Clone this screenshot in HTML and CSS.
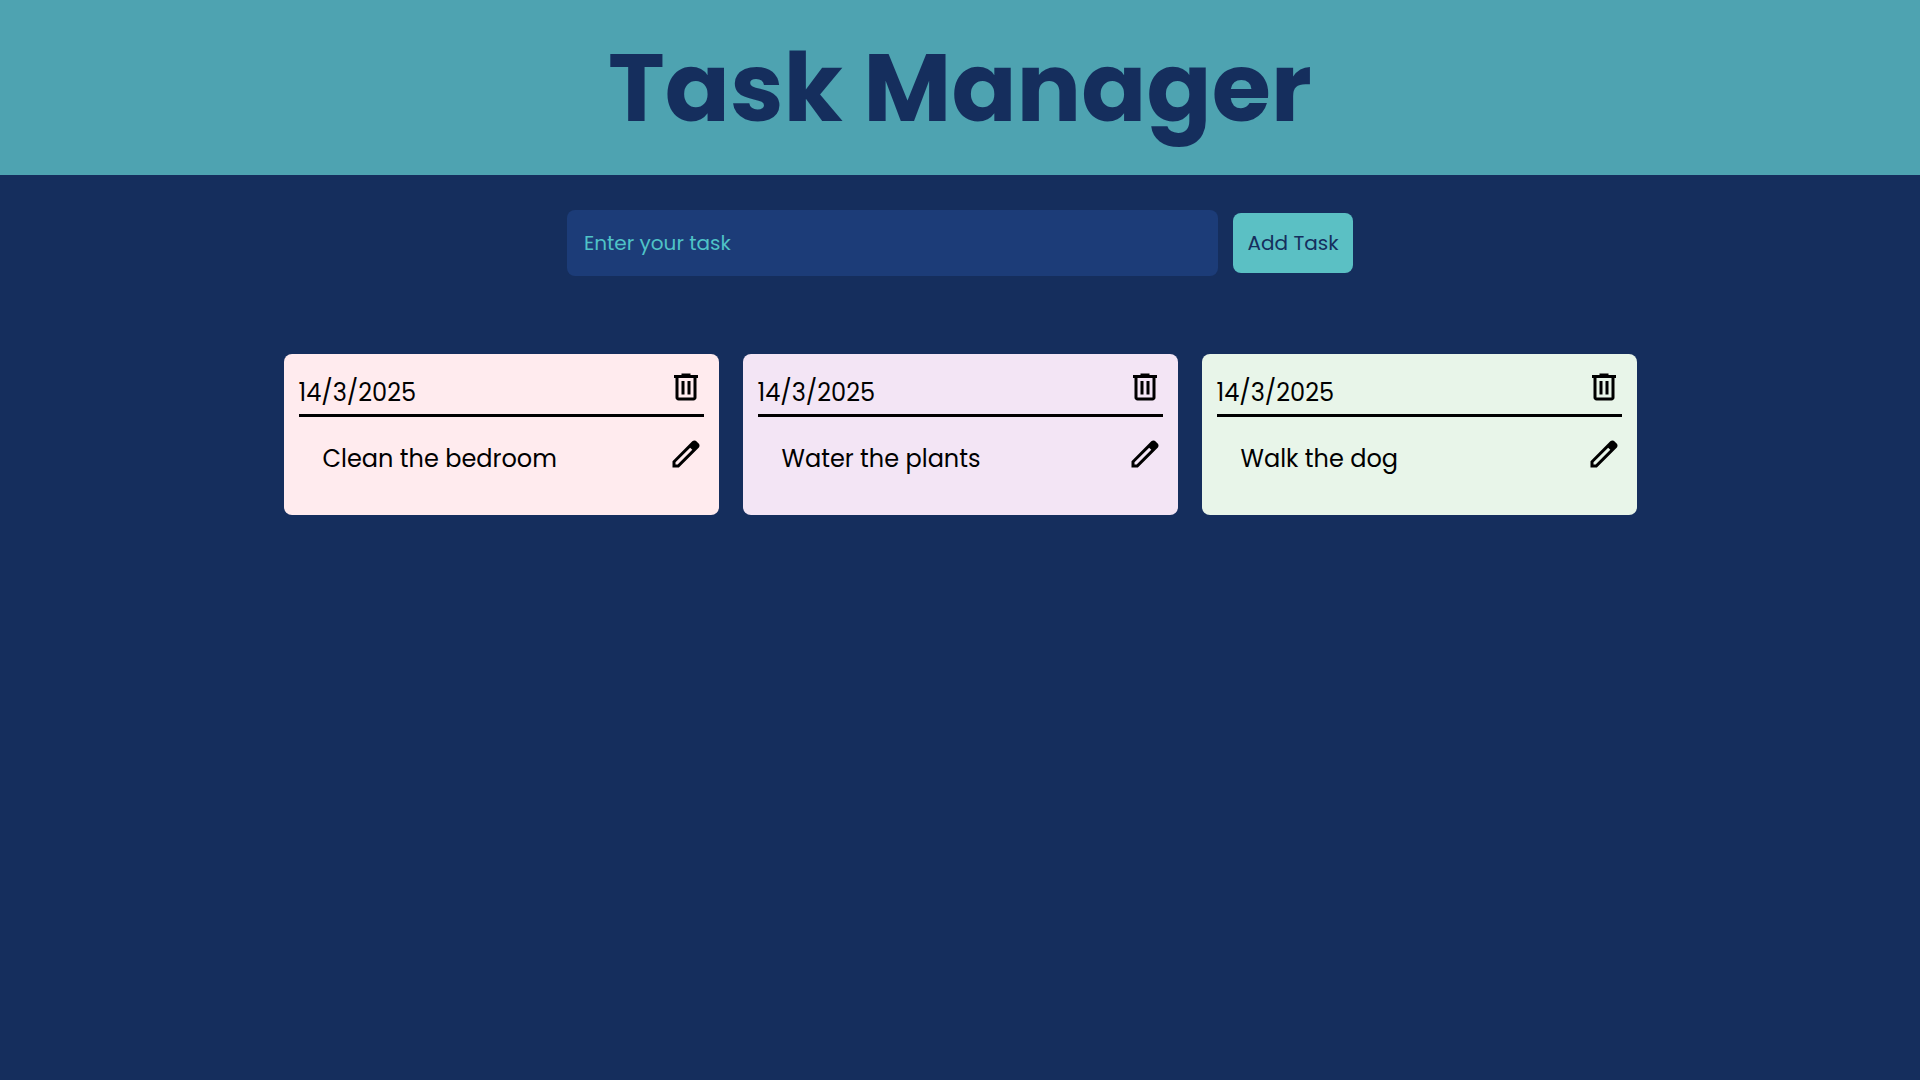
FILE: index.html
```html
<!DOCTYPE html>
<html lang="en">
<head>
  <meta charset="utf-8">
  <meta name="viewport" content="width=device-width, initial-scale=1">
  <title>Task Manager</title>
  <link rel="stylesheet" href="styles.css">
</head>
<body>
  <svg class="sprite" aria-hidden="true">
    <symbol id="icon-delete" viewBox="0 -960 960 960">
      <path d="M280-120q-33 0-56.5-23.5T200-200v-520h-40v-80h200v-40h240v40h200v80h-40v520q0 33-23.5 56.5T680-120H280Zm400-600H280v520h400v-520ZM360-280h80v-360h-80v360Zm160 0h80v-360h-80v360Z"/>
    </symbol>
    <symbol id="icon-edit" viewBox="0 -960 960 960">
      <path d="M200-200h57l391-391-57-57-391 391v57Zm-80 80v-170l528-527q12-11 26.5-17t30.5-6q16 0 31 6t26 18l55 56q12 11 17.5 26t5.5 30q0 16-5.5 30.5T817-647L290-120H120Zm640-584-56-56 56 56Zm-141 85-28-29 57 57-29-28Z"/>
    </symbol>
  </svg>

  <header class="header">
    <h1 class="title">Task Manager</h1>
  </header>

  <main class="main">
    <form class="task-form">
      <input class="task-input" type="text" placeholder="Enter your task" aria-label="Enter your task">
      <button class="add-button" type="button">Add Task</button>
    </form>

    <ul class="tasks">
      <li class="card card-pink">
        <div class="card-head">
          <time class="date" datetime="2025-03-14">14/3/2025</time>
          <button class="icon-button" type="button" aria-label="Delete task"><svg class="icon"><use href="#icon-delete"/></svg></button>
        </div>
        <div class="card-body">
          <p class="task">Clean the bedroom</p>
          <button class="icon-button" type="button" aria-label="Edit task"><svg class="icon"><use href="#icon-edit"/></svg></button>
        </div>
      </li>
      <li class="card card-purple">
        <div class="card-head">
          <time class="date" datetime="2025-03-14">14/3/2025</time>
          <button class="icon-button" type="button" aria-label="Delete task"><svg class="icon"><use href="#icon-delete"/></svg></button>
        </div>
        <div class="card-body">
          <p class="task">Water the plants</p>
          <button class="icon-button" type="button" aria-label="Edit task"><svg class="icon"><use href="#icon-edit"/></svg></button>
        </div>
      </li>
      <li class="card card-green">
        <div class="card-head">
          <time class="date" datetime="2025-03-14">14/3/2025</time>
          <button class="icon-button" type="button" aria-label="Delete task"><svg class="icon"><use href="#icon-delete"/></svg></button>
        </div>
        <div class="card-body">
          <p class="task">Walk the dog</p>
          <button class="icon-button" type="button" aria-label="Edit task"><svg class="icon"><use href="#icon-edit"/></svg></button>
        </div>
      </li>
    </ul>
  </main>
</body>
</html>
```
FILE: styles.css
```css
* {
  box-sizing: border-box;
  margin: 0;
  padding: 0;
}

body {
  min-height: 100vh;
  background: #152e5d;
  color: #000;
  font-family: Poppins, Inter, sans-serif;
  font-size: 24px;
  line-height: 36px;
}

.sprite {
  display: none;
}

.header {
  padding: 15px;
  background: #4ea3b1;
  text-align: center;
}

.title {
  color: #152e5d;
  font-size: 96px;
  font-weight: 700;
  line-height: 145px;
}

.main {
  display: flex;
  flex-direction: column;
  gap: 78px;
  padding: 35px 24px;
}

.task-form {
  display: flex;
  align-items: center;
  gap: 15px;
  width: 100%;
  max-width: 786px;
  margin: 0 auto;
}

.task-input,
.add-button {
  border: 0;
  border-radius: 8px;
  font-family: inherit;
  font-size: 20px;
  line-height: 30px;
}

.task-input {
  flex: 1;
  min-width: 0;
  padding: 18px 17px;
  background: #1c3c78;
  color: #4fc3c7;
}

.task-input::placeholder {
  color: #4fc3c7;
  opacity: 1;
}

.add-button {
  min-width: 120px;
  padding: 15px 14px;
  background: #5bc0c4;
  color: #152e5d;
  cursor: pointer;
}

.tasks {
  display: grid;
  grid-template-columns: repeat(auto-fit, minmax(300px, 1fr));
  gap: 24px;
  width: 100%;
  max-width: 1353px;
  margin: 0 auto;
  list-style: none;
}

.card {
  padding: 15px;
  border-radius: 8px;
}

.card-pink {
  background: #ffebee;
}

.card-purple {
  background: #f3e5f5;
}

.card-green {
  background: #e8f5e9;
}

.card-head {
  display: flex;
  align-items: flex-start;
  justify-content: space-between;
  border-bottom: 3px solid #000;
}

.date {
  padding: 6px 0 3px;
}

.card-body {
  display: flex;
  align-items: flex-start;
  justify-content: space-between;
  padding: 19px 0 23px 24px;
}

.task {
  padding-top: 5px;
}

.icon-button {
  border: 0;
  background: none;
  color: inherit;
  cursor: pointer;
}

.icon {
  display: block;
  width: 36px;
  height: 36px;
  fill: currentColor;
}
```
